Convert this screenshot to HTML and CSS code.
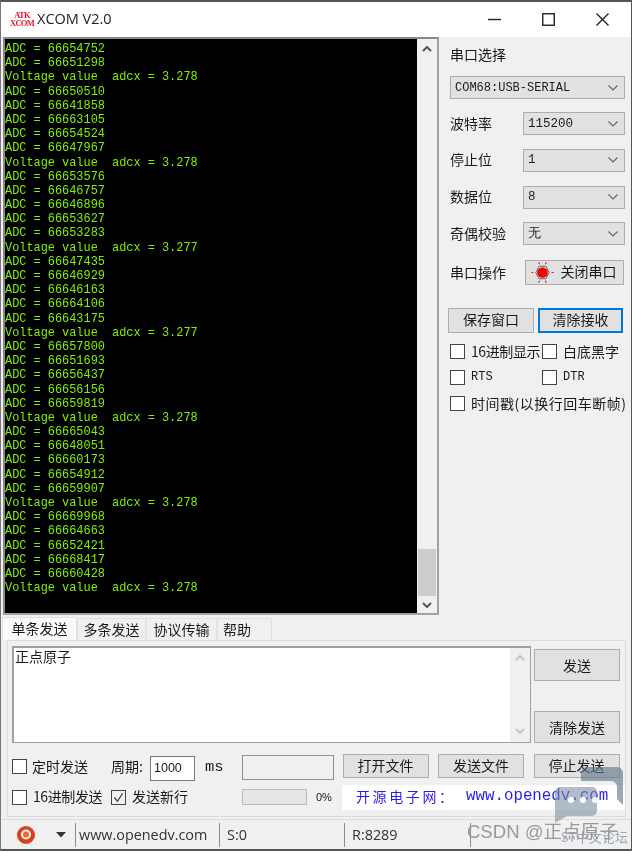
FILE: index.html
```html
<!DOCTYPE html>
<html lang="zh">
<head>
<meta charset="utf-8">
<title>XCOM V2.0</title>
<link rel="stylesheet" href="styles.css">
</head>
<body>
<div class="window">
  <header class="titlebar">
    <div class="logo"><span>ATK</span><span>XCOM</span></div>
    <div class="app-title">XCOM V2.0</div>
    <div class="win-controls">
      <svg class="win-btn" viewBox="0 0 13 13"><path d="M0 6.5H13" /></svg>
      <svg class="win-btn" viewBox="0 0 13 13"><rect x=".75" y=".75" width="11.5" height="11.5" /></svg>
      <svg class="win-btn" viewBox="0 0 13 13"><path d="M.5 .5L12.5 12.5M12.5 .5L.5 12.5" /></svg>
    </div>
  </header>

  <div class="main">
    <section class="terminal">
      <pre class="term-text">ADC = 66654752
ADC = 66651298
Voltage value  adcx = 3.278
ADC = 66650510
ADC = 66641858
ADC = 66663105
ADC = 66654524
ADC = 66647967
Voltage value  adcx = 3.278
ADC = 66653576
ADC = 66646757
ADC = 66646896
ADC = 66653627
ADC = 66653283
Voltage value  adcx = 3.277
ADC = 66647435
ADC = 66646929
ADC = 66646163
ADC = 66664106
ADC = 66643175
Voltage value  adcx = 3.277
ADC = 66657800
ADC = 66651693
ADC = 66656437
ADC = 66656156
ADC = 66659819
Voltage value  adcx = 3.278
ADC = 66665043
ADC = 66648051
ADC = 66660173
ADC = 66654912
ADC = 66659907
Voltage value  adcx = 3.278
ADC = 66669968
ADC = 66664663
ADC = 66652421
ADC = 66668417
ADC = 66660428
Voltage value  adcx = 3.278</pre>
      <div class="scrollbar">
        <svg class="arrow" viewBox="0 0 10 6"><path d="M1 5L5 1L9 5" /></svg>
        <div class="thumb"></div>
        <svg class="arrow" viewBox="0 0 10 6"><path d="M1 1L5 5L9 1" /></svg>
      </div>
    </section>

    <aside class="side">
      <div class="heading">串口选择</div>
      <div class="select select-wide"><span class="mono">COM68:USB-SERIAL</span><svg class="chev" viewBox="0 0 10 6"><path d="M.5 .5L5 5L9.5 .5" /></svg></div>
      <div class="form-row"><span class="label">波特率</span><div class="select"><span class="val">115200</span><svg class="chev" viewBox="0 0 10 6"><path d="M.5 .5L5 5L9.5 .5" /></svg></div></div>
      <div class="form-row"><span class="label">停止位</span><div class="select"><span class="val">1</span><svg class="chev" viewBox="0 0 10 6"><path d="M.5 .5L5 5L9.5 .5" /></svg></div></div>
      <div class="form-row"><span class="label">数据位</span><div class="select"><span class="val">8</span><svg class="chev" viewBox="0 0 10 6"><path d="M.5 .5L5 5L9.5 .5" /></svg></div></div>
      <div class="form-row"><span class="label">奇偶校验</span><div class="select"><span class="val">无</span><svg class="chev" viewBox="0 0 10 6"><path d="M.5 .5L5 5L9.5 .5" /></svg></div></div>
      <div class="form-row op-row">
        <span class="label">串口操作</span>
        <div class="btn btn-lift op-btn">
          <svg class="led" viewBox="0 0 24 24">
            <path d="M8.5 5.5H15.5L19 12L15.5 18.5H8.5L5 12Z" fill="#f2f2f2" stroke="#555" stroke-width="1"/>
            <circle cx="12" cy="12" r="5.6" fill="#f40000"/>
            <path d="M8 1.5L9 3.5M16 1.5L15 3.5M0.5 12H2.5M21.5 12H23.5M8 22.5L9 20.5M16 22.5L15 20.5" stroke="#f40000" stroke-width="1.1" fill="none"/>
          </svg>
          <span>关闭串口</span>
        </div>
      </div>
      <div class="btn-row">
        <div class="btn btn-lift btn-save">保存窗口</div>
        <div class="btn btn-lift btn-clear">清除接收</div>
      </div>
      <div class="check-grid">
        <label class="check"><span class="box"></span><span class="tight">16进制显示</span></label>
        <label class="check"><span class="box"></span><span>白底黑字</span></label>
        <label class="check"><span class="box"></span><span class="mono">RTS</span></label>
        <label class="check"><span class="box"></span><span class="mono">DTR</span></label>
        <label class="check check-span"><span class="box"></span><span class="wide-text">时间戳(以换行回车断帧)</span></label>
      </div>
    </aside>
  </div>

  <nav class="tabs">
    <div class="tab tab-active">单条发送</div>
    <div class="tab tab-2">多条发送</div>
    <div class="tab tab-3">协议传输</div>
    <div class="tab tab-4">帮助</div>
  </nav>

  <section class="send-panel">
    <div class="send-top">
      <div class="send-input">
        <div class="send-text">正点原子</div>
        <div class="send-scroll">
          <svg class="arrow faint" viewBox="0 0 10 6"><path d="M1 5L5 1L9 5" /></svg>
          <svg class="arrow faint" viewBox="0 0 10 6"><path d="M1 1L5 5L9 1" /></svg>
        </div>
      </div>
      <div class="send-btns">
        <div class="btn send-btn">发送</div>
        <div class="btn send-btn">清除发送</div>
      </div>
    </div>

    <div class="opt-row opt-row-1">
      <label class="check timed"><span class="box"></span><span class="lift">定时发送</span></label>
      <span class="period lift">周期:</span>
      <div class="period-input">1000</div>
      <span class="mono ms">ms</span>
      <div class="path-input"></div>
      <div class="btn btn-lift file-btn">打开文件</div>
      <div class="btn btn-lift file-btn">发送文件</div>
      <div class="btn btn-lift file-btn">停止发送</div>
    </div>

    <div class="opt-row opt-row-2">
      <label class="check hexsend"><span class="box"></span><span class="tight lift">16进制发送</span></label>
      <label class="check newline">
        <span class="box box-on"><svg viewBox="0 0 14 14"><path d="M2.5 7L5.8 11L11.5 2.5" /></svg></span>
        <span class="lift">发送新行</span>
      </label>
      <div class="progress"></div>
      <span class="percent">0%</span>
      <div class="banner"><span class="banner-cjk">开源电子网：</span><span class="banner-url">www.openedv.com</span></div>
    </div>
  </section>

  <footer class="statusbar">
    <svg class="power" viewBox="0 0 20 20">
      <circle cx="10" cy="10" r="9" fill="#d9401c"/>
      <circle cx="10" cy="9.5" r="5" fill="#f4f0ea"/>
      <circle cx="10" cy="9.5" r="3" fill="#ea6a3a"/>
    </svg>
    <svg class="caret" viewBox="0 0 10 6"><path d="M0 0H10L5 5.5Z" /></svg>
    <div class="cell cell-url">www.openedv.com</div>
    <div class="cell cell-s">S:0</div>
    <div class="cell cell-r">R:8289</div>
    <div class="cell cell-end"></div>
  </footer>

  <div class="watermark">
    <svg class="bubbles" viewBox="0 0 72 58">
      <path d="M32 0H62a6 6 0 0 1 6 6V38L62 32V20a6 6 0 0 0-6-6H26V6a6 6 0 0 1 6-6Z" fill="#5f7389" opacity=".62"/>
      <path d="M5 20H37a5 5 0 0 1 5 5V44a5 5 0 0 1-5 5H12L0 56V25a5 5 0 0 1 5-5Z" fill="#7d90a3" opacity=".6"/>
      <circle cx="16" cy="33" r="3" fill="#fff"/><circle cx="28" cy="33" r="3" fill="#fff"/><circle cx="40" cy="33" r="3" fill="#fff" opacity=".9"/>
    </svg>
    <div class="wm-small">ST中文论坛</div>
    <div class="wm-text">CSDN @正点原子</div>
  </div>
</div>
</body>
</html>
```
FILE: styles.css
```css
* { box-sizing: border-box; }
html, body { margin: 0; padding: 0; background: #fff; }
body { width: 633px; height: 853px; overflow: hidden; font-family: "Noto Sans CJK SC", "Liberation Sans", sans-serif; color: #1a1a1a; font-size: 14px; }
svg { display: block; }

.window { position: relative; width: 632px; height: 851px; background: #f0f0f0; border: 1px solid #555; border-top-width: 2px; border-bottom-width: 2px; border-left-color: #777; padding-left: 1px; filter: blur(.3px); }

.titlebar { height: 35px; margin-left: -1px; background: #fff; display: flex; align-items: center; padding-left: 11px; }
.logo { width: 20px; height: 18px; display: flex; flex-direction: column; align-items: center; font-family: "Liberation Serif", serif; font-weight: 700; font-size: 8.5px; line-height: 8.5px; color: #e8182c; letter-spacing: -.7px; }
.app-title { margin-left: 5px; margin-top: -2px; font-family: "Open Sans", sans-serif; font-size: 14.5px; color: #222; }
.win-controls { margin-left: auto; display: flex; align-items: center; gap: 41px; padding-right: 22px; }
.win-btn { width: 13px; height: 13px; fill: none; stroke: #222; stroke-width: 1.4; }

.main { display: flex; height: 580px; }
.terminal { flex: none; width: 436px; height: 578px; margin-left: 1px; display: flex; background: #f0f0f0; border: 2px solid #a2a2a2; border-left-color: #8a8a8a; border-top-color: #8a8a8a; }
.term-text { flex: none; margin: 0; width: 412px; height: 100%; padding: 3px 0 0 0; background: #000; color: #80f000; font-family: "Liberation Mono", monospace; font-size: 11.9px; line-height: 14.18px; overflow: hidden; }
.scrollbar { flex: 1; display: flex; flex-direction: column; align-items: center; justify-content: space-between; padding: 7px 0 5px; position: relative; }
.arrow { width: 10px; height: 6px; fill: none; stroke: #555; stroke-width: 2; }
.arrow.faint { stroke: #c4c4c4; }
.thumb { width: 18px; height: 47px; margin-top: auto; margin-bottom: 6px; background: #cdcdcd; }

.side { flex: none; width: 190px; padding: 6px 0 0 11px; }
.heading { height: 22px; line-height: 22px; }
.select { width: 102px; height: 23px; display: flex; align-items: center; justify-content: space-between; padding: 0 6px 0 4px; background: #e1e1e1; border: 1px solid #adadad; }
.select-wide { width: 175px; margin-top: 11px; }
.mono { font-family: "Liberation Mono", monospace; font-size: 12px; }
.val { font-family: "Liberation Mono", monospace; font-size: 12.5px; }
.chev { width: 10px; height: 6px; fill: none; stroke: #666; stroke-width: 1.2; }
.form-row { display: flex; align-items: center; justify-content: space-between; width: 175px; height: 24px; margin-top: 12.7px; }
.label { line-height: 22px; padding-bottom: 2px; }
.op-row { margin-top: 14.5px; height: 25px; }
.btn { display: flex; align-items: center; justify-content: center; background: #e1e1e1; border: 1px solid #adadad; font-size: 14px; }
.btn-lift { padding-bottom: 3px; }
.op-btn { width: 99px; height: 25px; margin-right: 1px; gap: 7px; padding-right: 2px; }
.led { width: 23px; height: 23px; flex: none; margin-bottom: -3px; }
.btn-row { display: flex; gap: 4px; margin: 23px 0 0 -2px; }
.btn-save { width: 86px; height: 25px; }
.btn-clear { width: 85px; height: 25px; border: 2px solid #0078d7; }
.check-grid { display: grid; grid-template-columns: 92px 90px; grid-auto-rows: 26px; margin-top: 5px; white-space: nowrap; }
.check { display: flex; align-items: center; gap: 6px; }
.check-span { grid-column: span 2; }
.box { flex: none; width: 15px; height: 15px; background: #fff; border: 1px solid #444; }
.box-on { background: #f0f0f0; }
.box-on svg { width: 13px; height: 13px; fill: none; stroke: #444; stroke-width: 1.3; }
.wide-text { letter-spacing: .5px; }
.tight { letter-spacing: -.4px; }
.lift { padding-bottom: 3px; }

.tabs { display: flex; height: 23px; margin: 0; align-items: flex-end; }
.tab { height: 22px; display: flex; align-items: center; justify-content: center; border: 1px solid #e2e2e2; border-bottom: 0; line-height: 1; padding-bottom: 2px; }
.tab-active { height: 23px; width: 75px; background: #fafafa; }
.tab-2 { width: 69px; }
.tab-3 { width: 71px; }
.tab-4 { width: 55px; justify-content: flex-start; padding-left: 5px; }

.send-panel { width: 619px; height: 177px; margin-left: 5px; border: 1px solid #dcdcdc; padding: 5px 0 0 4px; }
.send-top { display: flex; gap: 3px; height: 97px; }
.send-input { width: 519px; display: flex; background: #fff; border: 2px solid #a0a0a0; border-right-width: 1px; border-bottom-width: 1px; }
.send-text { flex: 1; padding: 0 0 0 1px; line-height: 16px; }
.send-scroll { width: 20px; display: flex; flex-direction: column; justify-content: space-between; align-items: center; padding: 7px 0 8px; background: #f0f0f0; }
.send-btns { display: flex; flex-direction: column; justify-content: space-between; padding: 3px 0 0; width: 86px; }
.send-btn { width: 86px; height: 32px; }

.opt-row { display: flex; align-items: center; white-space: nowrap; }
.opt-row-1 { height: 26px; margin-top: 11px; }
.opt-row-2 { height: 26px; margin-top: 4px; }
.timed { width: 99px; gap: 5px; }
.timed .box { margin-bottom: 2px; }
.period { width: 39px; }
.period-input { width: 45px; height: 25px; margin-top: 2px; background: #fff; border: 1px solid #7a7a7a; padding-left: 3px; line-height: 23px; font-size: 12.5px; font-family: "Liberation Sans", sans-serif; }
.ms { margin-left: 10px; width: 37px; font-size: 15.5px; }
.path-input { width: 92px; height: 25px; background: #f0f0f0; border: 1px solid #8f8f8f; }
.file-btn { width: 86px; height: 24px; margin-left: 9.5px; margin-bottom: 2px; }
.opt-row-1 .path-input + .file-btn { margin-left: 8.5px; }
.hexsend { width: 99px; gap: 6px; }
.newline { width: 131px; gap: 6px; }
.progress { width: 65px; height: 16px; background: #e6e6e6; border: 1px solid #bcbcbc; }
.percent { width: 26px; margin-left: 9px; font-size: 11px; font-family: "Liberation Sans", sans-serif; }
.banner { width: 283px; height: 25px; background: #fff; color: #2a1cf0; display: flex; align-items: center; padding: 0 0 2px 14px; }
.banner-cjk { font-size: 14px; letter-spacing: 2.6px; width: 110px; }
.banner-url { font-family: "Liberation Mono", monospace; font-size: 15.8px; }

.statusbar { display: flex; align-items: center; height: 31px; margin-top: 2px; border-top: 1px solid #dcdcdc; font-family: "Open Sans", sans-serif; font-size: 14.4px; color: #333; }
.power { width: 20px; height: 20px; margin-left: 14px; }
.caret { width: 10px; height: 6px; margin-left: 20px; fill: #333; }
.cell { height: 24px; line-height: 23px; border-left: 1px solid #8c8c8c; padding-left: 3px; white-space: nowrap; }
.cell-url { margin-left: 9px; width: 144px; }
.cell-s { width: 125px; padding-left: 7px; }
.cell-r { width: 126px; padding-left: 7px; }
.cell-end { flex: 1; }

.watermark { position: absolute; right: 4px; bottom: 0; width: 165px; height: 80px; pointer-events: none; }
.bubbles { position: absolute; right: 0; top: -2px; width: 72px; height: 58px; }
.wm-small { position: absolute; right: -1px; bottom: 3px; font-size: 13px; color: #7e8fa3; opacity: .75; white-space: nowrap; }
.wm-text { position: absolute; right: 9px; bottom: 6px; color: #9a9a9a; font-family: "Liberation Sans", "Noto Sans CJK SC", sans-serif; font-size: 18.6px; white-space: nowrap; }
```
